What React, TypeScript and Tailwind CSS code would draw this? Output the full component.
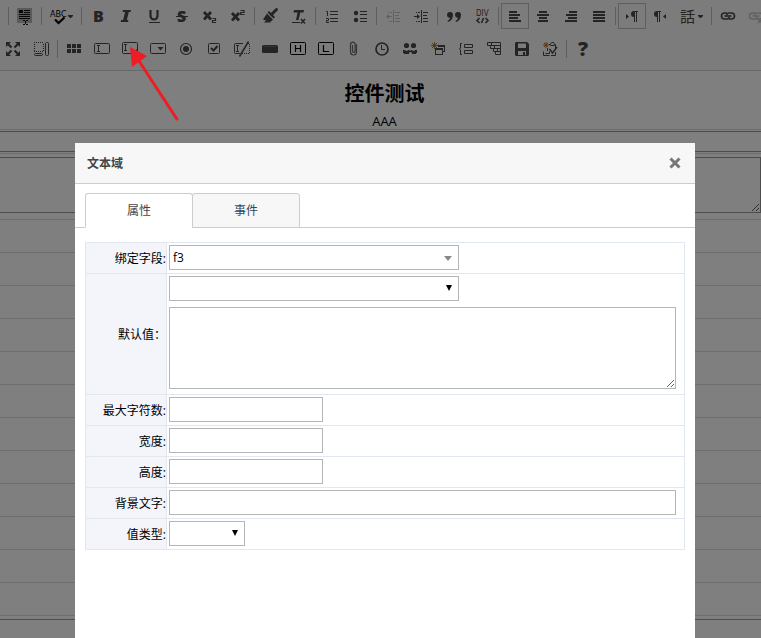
import React, { useState } from 'react';

type Tool = {
  name: string;
  icon?: React.ReactNode;
  wide?: boolean;
  active?: boolean;
  disabled?: boolean;
};

const SEP: Tool = { name: '|' };

const line = { fill: 'none', stroke: 'currentColor' };

const boldText = {
  fontFamily: '"Open Sans", "Noto Sans", sans-serif',
  fontWeight: 800,
};

const smallText = '"DejaVu Sans Condensed", "Liberation Sans", sans-serif';

const caret = <path d="M24 12h5v1l-2 2h-1l-2-2z" />;

const chain = (
  <g {...line} strokeWidth="1.6">
    <path d="M13 10h-2.5a3 3 0 0 0 0 6H13a2.5 2.500 0 0 0 2.4-2" />
    <path d="M15 16h2.5a3 3 0 0 0 0-6H15a2.5 2.500 0 0 0-2.4 2" />
    <path d="M10.5 13h7" />
  </g>
);

const pilcrow = 'M16 8h4v1h-1v10h-1V9h-1v10h-1v-5a3 3 0 0 1 0-6z';

const rowOne: Tool[] = [
  SEP,
  {
    name: 'Form properties',
    icon: (
      <>
        <path fill="#b4b4b4" d="M6 5h15v15H6z" />
        <path fill="#111" d="M8 7h4v3H8zM13 7h6v1h-6zM13 9h6v1h-6zM8 11h11v1H8zM8 13h11v1H8zM8 15h11v1H8zM12 17h2v1h-2zM15 17h2v1h-2zM12 21h2v1h-2zM15 21h2v1h-2zM14 18h1v3h-1z" />
      </>
    ),
  },
  SEP,
  {
    name: 'Spell check',
    wide: true,
    icon: (
      <>
        <text x="6" y="14" fontSize="9" fill="#000" fontFamily={smallText}>ABC</text>
        <path d="M11 16.5l3.5 3.5 6-5.5" fill="none" stroke="#000" strokeWidth="2.2" />
        {caret}
      </>
    ),
  },
  SEP,
  { name: 'Bold', icon: <text x="9" y="19" fontSize="16" {...boldText}>B</text> },
  {
    name: 'Italic',
    icon: <path d="M11 7h8l-.4 2h-1.800l-2 8h1.700l-.5 2H8.600l.5-2h2l2-8h-2.600z" />,
  },
  {
    name: 'Underline',
    icon: (
      <>
        <path d="M10.500 7v6a3.500 3.500 0 0 0 7 0V7" {...line} strokeWidth="2.200" />
        <path d="M9 19h11v1H9z" />
      </>
    ),
  },
  {
    name: 'Strikethrough',
    icon: (
      <>
        <text x="9" y="19" fontSize="16" {...boldText}>S</text>
        <path d="M8 13h12v1H8z" />
      </>
    ),
  },
  {
    name: 'Subscript',
    icon: (
      <>
        <path d="M8 9l7 7.500M15 9l-7 7.500" {...line} strokeWidth="2.800" />
        <path d="M16.500 15.500h3v2h-3v2H20" {...line} strokeWidth="1.200" />
      </>
    ),
  },
  {
    name: 'Superscript',
    icon: (
      <>
        <path d="M8 10l7 7.500M15 10l-7 7.500" {...line} strokeWidth="2.800" />
        <path d="M16.500 7.500h3.500v2h-3.500v2h4" {...line} strokeWidth="1.200" />
      </>
    ),
  },
  SEP,
  {
    name: 'Copy formatting',
    icon: (
      <>
        <path d="M19.500 6.500l-5 5" {...line} strokeWidth="3" strokeLinecap="round" />
        <path d="M12 8l6 6-1.500 1.500-6-6z" />
        <path d="M10 10.500l6 6-3 3H7l2-2-3-1z" />
      </>
    ),
  },
  {
    name: 'Remove format',
    icon: (
      <>
        <path d="M9 7h10l-.5 2.500h-3.200L13.500 17H11l1.600-7.500H8.500z" />
        <path d="M7 19h8v1H7z" />
        <path d="M16 16l4 4.500M20 16l-4 4.500" {...line} strokeWidth="1.500" />
      </>
    ),
  },
  SEP,
  {
    name: 'Numbered list',
    icon: (
      <>
        <path d="M12 8h8v1h-8zM12 11h8v1h-8zM12 15h8v1h-8zM12 18h8v1h-8z" />
        <path d="M8 8.500h1.500V13M8 15.500h2.500v2h-2v2h2.500" {...line} />
      </>
    ),
  },
  {
    name: 'Bulleted list',
    icon: (
      <>
        <path d="M14 8h7v1h-7zM14 11h7v1h-7zM14 15h7v1h-7zM14 18h7v1h-7z" />
        <circle cx="10" cy="10" r="2.200" />
        <circle cx="10" cy="17" r="2.200" />
      </>
    ),
  },
  SEP,
  {
    name: 'Decrease indent',
    disabled: true,
    icon: (
      <path d="M14 7h1v13h-1zM16 9h5v1h-5zM16 12h4v1h-4zM16 15h5v1h-5zM16 18h5v1h-5zM9 9h1v1H9zM11 9h2v1h-2zM9 18h1v1H9zM11 18h2v1h-2zM7 13.500l3-2.500v2h3v1h-3v2z" />
    ),
  },
  {
    name: 'Increase indent',
    icon: (
      <path d="M14 7h1v13h-1zM16 9h5v1h-5zM16 12h4v1h-4zM16 15h5v1h-5zM16 18h5v1h-5zM9 9h1v1H9zM11 9h2v1h-2zM9 18h1v1H9zM11 18h2v1h-2zM13 13.500L10 11v2H7v1h3v2z" />
    ),
  },
  SEP,
  {
    name: 'Block quote',
    icon: (
      <>
        <path d="M10 9a2.700 2.700 0 0 1 3 3c0 3.500-2 6-5 7l-.5-1c1.600-.8 2.300-1.800 2.400-3.200A2.900 2.900 0 0 1 10 9z" />
        <path d="M18 9a2.700 2.700 0 0 1 3 3c0 3.500-2 6-5 7l-.5-1c1.600-.8 2.300-1.800 2.400-3.200A2.900 2.900 0 0 1 18 9z" />
      </>
    ),
  },
  {
    name: 'Div container',
    icon: (
      <>
        <text x="8" y="13" fontSize="8" fontFamily={smallText}>DIV</text>
        <path d="M11.500 15L9 17.500l2.500 2.500M17.500 15l2.500 2.500-2.500 2.500M15.500 15l-2 5" {...line} strokeWidth="1.600" />
      </>
    ),
  },
  SEP,
  { name: 'Align left', active: true, icon: <path d="M8 8h8v2H8zM8 11h11v2H8zM8 14h9v2H8zM8 17h12v2H8z" /> },
  { name: 'Center', icon: <path d="M10 8h8v2h-8zM8 11h12v2H8zM10 14h8v2h-8zM9 17h10v2H9z" /> },
  { name: 'Align right', icon: <path d="M12 8h8v2h-8zM9 11h11v2H9zM11 14h9v2h-9zM8 17h12v2H8z" /> },
  { name: 'Justify', icon: <path d="M8 8h12v2H8zM8 11h12v2H8zM8 14h12v2H8zM8 17h12v2H8z" /> },
  SEP,
  {
    name: 'Text direction left to right',
    active: true,
    icon: (
      <>
        <path d={pilcrow} />
        <path d="M8 11l3 2.500L8 16z" />
      </>
    ),
  },
  {
    name: 'Text direction right to left',
    icon: (
      <>
        <path d={pilcrow} transform="translate(-5 0)" />
        <path d="M20 11l-3 2.500 3 2.500z" />
      </>
    ),
  },
  {
    name: 'Language',
    wide: true,
    icon: (
      <>
        <text x="6" y="19" fontSize="15" fontFamily='"Noto Sans CJK JP", sans-serif'>話</text>
        {caret}
      </>
    ),
  },
  SEP,
  { name: 'Link', icon: chain },
  {
    name: 'Unlink',
    disabled: true,
    icon: (
      <>
        {chain}
        <path d="M16 16l4 4M20 16l-4 4" {...line} strokeWidth="1.500" />
      </>
    ),
  },
];

const rowTwo: Tool[] = [
  {
    name: 'Maximize',
    icon: (
      <>
        <path d="M7 6h5l-5 5zM21 6v5l-5-5zM7 20v-5l5 5zM21 20h-5l5-5z" />
        <path d="M8 7l4.500 4.500M20 7l-4.500 4.500M8 19l4.500-4.500M20 19l-4.500-4.500" {...line} strokeWidth="2.200" />
      </>
    ),
  },
  {
    name: 'Show blocks',
    icon: (
      <>
        <path d="M7 6.500h10M7 15.500h10M7.500 8v7M16.500 8v7" {...line} strokeWidth="1.200" strokeDasharray="1 1" />
        <rect x="7.500" y="17.500" width="8" height="2" rx="1" {...line} />
        <rect x="18.500" y="6.500" width="3" height="13" rx="1" {...line} />
      </>
    ),
  },
  SEP,
  { name: 'Table', icon: <path d="M7 8h4v4H7zM12 8h4v4h-4zM17 8h4v4h-4zM7 13h4v4H7zM12 13h4v4h-4zM17 13h4v4h-4z" /> },
  {
    name: 'Text field',
    icon: (
      <>
        <rect x="6.500" y="7.500" width="15" height="10" rx="1" {...line} />
        <path d="M9 9.500h3M9 15.500h3M10.500 9.500v6" {...line} />
      </>
    ),
  },
  {
    name: 'Textarea',
    icon: (
      <>
        <rect x="6.500" y="6.500" width="15" height="11" rx="1" {...line} />
        <path d="M8 8.500h3M8 14.500h3M9.500 8.500v6" {...line} />
        <path d="M21 13v4h-4z" />
      </>
    ),
  },
  {
    name: 'Selection field',
    icon: (
      <>
        <rect x="6.500" y="7.500" width="15" height="10" rx="1" {...line} />
        <path d="M13.500 11h6l-3 3.500z" />
      </>
    ),
  },
  {
    name: 'Radio button',
    icon: (
      <>
        <circle cx="14" cy="13" r="5.500" {...line} strokeWidth="1.200" />
        <circle cx="14" cy="13" r="3" />
      </>
    ),
  },
  {
    name: 'Checkbox',
    icon: (
      <>
        <rect x="8.500" y="7.500" width="11" height="10" rx="1" {...line} />
        <path d="M11 12l2.500 2.500 4-4.500" {...line} strokeWidth="2" />
      </>
    ),
  },
  {
    name: 'Hidden field',
    icon: (
      <>
        <path d="M15 7.500H7.500a1 1 0 0 0-1 1v8a1 1 0 0 0 1 1H12M8 9.500h3M8 15.500h3M9.500 9.500v6" {...line} />
        <path d="M20 7.500h1.500v10H14" {...line} strokeDasharray="1 1" />
        <path d="M11.500 20.500l9-15" {...line} strokeWidth="1.500" />
      </>
    ),
  },
  {
    name: 'Button',
    icon: (
      <>
        <rect x="6" y="9" width="16" height="8" rx="1.500" />
        <path d="M8 10.500h12" stroke="#666" />
      </>
    ),
  },
  {
    name: 'HTML control',
    icon: (
      <>
        <rect x="6.500" y="6.500" width="15" height="12" rx="1" fill="none" stroke="#000" />
        <path d="M11.500 9v7M16.500 9v7M11.500 12.500h5" fill="none" stroke="#000" strokeWidth="1.200" />
      </>
    ),
  },
  {
    name: 'Label',
    icon: (
      <>
        <rect x="6.500" y="6.500" width="15" height="12" rx="1" fill="none" stroke="#000" />
        <path d="M11.500 9v6.500H17" fill="none" stroke="#000" strokeWidth="1.200" />
      </>
    ),
  },
  {
    name: 'Attachment',
    icon: (
      <path d="M12.500 9v6a1.300 1.300 0 0 0 2.600 0V8.500a2.200 2.200 0 0 0-4.600 0V16a3 3 0 0 0 6 0V8" {...line} strokeWidth="1.200" opacity=".8" />
    ),
  },
  {
    name: 'Date',
    icon: (
      <>
        <circle cx="14" cy="13" r="6" {...line} strokeWidth="1.700" />
        <path d="M13.500 9v4.500H17" {...line} />
      </>
    ),
  },
  {
    name: 'Users',
    icon: (
      <>
        <circle cx="10.500" cy="9.500" r="2.600" />
        <circle cx="17.500" cy="9.500" r="2.600" />
        <path d="M7 14h2l1 1h1l1-1h1l1 1 1-1h1l1 1h1l1-1h2v3h-1v1h-4v-1l-1-1h-1l-1 1v1H8v-1H7z" />
      </>
    ),
  },
  {
    name: 'New window',
    icon: (
      <>
        <path d="M10.500 6v7M7 9.500h7M8 7l5 5M13 7l-5 5" stroke="#b87417" />
        <path d="M14 9.500h7M14 10.500h7M20.500 9v7M19 15.500h2" {...line} />
        <rect x="11.500" y="12.500" width="7" height="6" {...line} />
        <path d="M11 12h8v2h-8z" />
      </>
    ),
  },
  {
    name: 'Field group',
    icon: (
      <>
        <path d="M10 7.500H8.500v4.500l-1 1 1 1v4.500H10" {...line} />
        <path d="M12.500 8.500h8v3h-8zM12.500 14.500h8v3h-8z" {...line} />
      </>
    ),
  },
  {
    name: 'Tree',
    icon: (
      <path d="M7.500 6.500h13v3h-13zM10.500 9.500h10v3h-10zM13.500 12.500h7v3h-7zM15.500 15.500h5v3h-5zM11.500 6.500v3M14.500 9.500v3M17.500 12.500v3" {...line} />
    ),
  },
  {
    name: 'Save',
    icon: (
      <path fillRule="evenodd" d="M8 6h11l2 2v11l-1 1H8l-1-1V7zM10 7.500V12h8V7.500zM10 15v4h5v-3h2v3h1v-4z" />
    ),
  },
  {
    name: 'Template check',
    icon: (
      <>
        <path d="M10 6v6M7 9h6M8 7l4 4M12 7l-4 4" stroke="#b87417" />
        <path d="M13 8.500h1.500v1h4v-1h1V13M14.500 8l1-1.500h2l1 1.500M11.500 12v3M19.500 16v3.500H15" {...line} />
        <path d="M13.500 13l3 4 4.500-6" {...line} strokeWidth="1.500" />
        <path d="M7.500 15.500v4h6M9.500 17.500h4v-2" {...line} />
      </>
    ),
  },
  SEP,
  { name: 'Help', icon: <text x="9" y="20" fontSize="20" {...boldText}>?</text> },
];

const ToolRow = ({ tools, className }: { tools: Tool[]; className?: string }) => (
  <div className={`flex h-[26px] items-center ${className || ''}`}>
    {tools.map((tool, i) =>
      tool.icon ? (
        <button
          key={i}
          type="button"
          aria-label={tool.name}
          disabled={tool.disabled}
          className={`relative h-[26px] shrink-0 ${tool.wide ? 'w-[35px]' : 'w-7'} ${tool.active ? 'outline -outline-offset-1 outline-[#bcbcbc]' : ''} ${tool.disabled ? 'opacity-30' : ''}`}
        >
          <svg viewBox={tool.wide ? '0 0 35 26' : '0 0 28 26'} className="block h-full w-full fill-current">
            {tool.icon}
          </svg>
        </button>
      ) : (
        <span key={i} className="mx-[2px] h-[18px] w-px shrink-0 bg-[#bcbcbc]" />
      )
    )}
  </div>
);

const Field = ({ id, label, children }: { id: string; label: string; children: React.ReactNode }) => (
  <tr>
    <th scope="row" className="w-[81px] border border-[#e1e7f0] bg-[#f3f5fa] p-0 pt-[2px] text-right font-normal whitespace-nowrap">
      <label htmlFor={id}>{label}</label>
    </th>
    <td className="border border-[#e1e7f0] pt-[2px] pr-[8px] pb-[3px] pl-[2px]">{children}</td>
  </tr>
);

const box = 'block h-[25px] border border-[#b5b5b5] bg-white px-[3px] text-xs outline-none';

const Select = ({ id, label, options, width, soft }: { id: string; label?: string; options: string[]; width: string; soft?: boolean }) => (
  <div className={`relative ${width}`}>
    <select id={id} aria-label={label} className={`${box} w-full appearance-none`}>
      {options.map((o) => (
        <option key={o}>{o}</option>
      ))}
    </select>
    {soft ? (
      <svg viewBox="0 0 8 5" className="pointer-events-none absolute top-[11px] right-[7px] h-[5px] w-2 fill-[#888]">
        <path d="M0 0h8L4 5z" />
      </svg>
    ) : (
      <svg viewBox="0 0 6 6" className="pointer-events-none absolute top-[9px] right-[7px] h-[6px] w-[6px] fill-black">
        <path d="M0 0h6L3 6z" />
      </svg>
    )}
  </div>
);

const App = () => {
  const [tab, setTab] = useState('属性');

  return (
    <div className="relative min-h-screen overflow-hidden bg-white font-['Open_Sans','Noto_Sans_CJK_SC',sans-serif] text-xs text-black">
      {/* Editor page */}
      <div className="-ml-px flex flex-col gap-[7px] border-b border-[#d1d1d1] bg-[#f8f8f8] pt-[3px] pb-2 text-[#484848]">
        <ToolRow tools={rowOne} className="pl-[7px]" />
        <ToolRow tools={rowTwo} />
      </div>
      <header className="h-[59px] border-b border-[#dddddd] pt-[9px] pl-2 text-center">
        <h1 className="text-xl leading-7 font-bold">控件测试</h1>
        <p className="text-[13px] leading-[26px]">AAA</p>
      </header>
      <div className="border-b border-[#dddddd] py-px">
        <input aria-label="f1" className="block h-[21px] w-full border-y border-[#999] outline-none" />
      </div>
      <div className="border-b border-[#dddddd] pt-[3px] pb-[6px]">
        <textarea aria-label="f3" className="block h-14 w-full border border-l-0 border-[#999] outline-none" />
      </div>
      {Array.from({ length: 12 }, (_, i) => (
        <div key={i} className="h-[33px] border-b border-[#dddddd]" />
      ))}
      <div className="mt-[3px] border-t border-[#999]" />

      {/* Dialog */}
      <div className="absolute inset-0 flex bg-black/50 pt-[143px] pr-[66px] pl-[75px]">
        <div role="dialog" aria-label="文本域" className="min-w-0 flex-1 bg-white">
          <div className="flex h-[41px] items-center justify-between border-b border-[#cccccc] bg-[#f7f7f7] pr-[14px] pl-3">
            <h2 className="pt-[2px] font-bold text-[#444]">文本域</h2>
            <button type="button" aria-label="Close" className="text-[#777]">
              <svg viewBox="0 0 12 12" className="h-3 w-3 fill-none stroke-current stroke-3">
                <path d="M1.500 1.500l9 9M10.500 1.500l-9 9" />
              </svg>
            </button>
          </div>

          <div role="tablist" className="mt-[9px] flex border-b border-[#cccccc] pl-[10px]">
            {['属性', '事件'].map((name) => (
              <button
                key={name}
                type="button"
                role="tab"
                aria-selected={tab === name}
                onClick={() => setTab(name)}
                className={`-mr-px -mb-px h-[35px] w-[108px] rounded-t-[3px] border border-[#cccccc] ${tab === name ? 'border-b-white bg-white text-[#444]' : 'bg-[#f7f7f7] text-[#34495e]'}`}
              >
                {name}
              </button>
            ))}
          </div>

          <div className="px-[10px] pt-[14px]">
            <table className="w-full border-collapse">
              <tbody>
                <Field id="field" label="绑定字段:">
                  <Select id="field" options={['f3']} width="w-[290px]" soft />
                </Field>
                <Field id="value" label="默认值：">
                  <Select id="preset" label="默认值" options={['']} width="w-[290px]" />
                  <textarea id="value" className="mt-[6px] mb-[2px] block h-[82px] w-full border border-[#b5b5b5] bg-white outline-none" />
                </Field>
                <Field id="max" label="最大字符数:">
                  <input id="max" className={`${box} w-[154px]`} />
                </Field>
                <Field id="width" label="宽度:">
                  <input id="width" className={`${box} w-[154px]`} />
                </Field>
                <Field id="height" label="高度:">
                  <input id="height" className={`${box} w-[154px]`} />
                </Field>
                <Field id="placeholder" label="背景文字:">
                  <input id="placeholder" className={`${box} w-full`} />
                </Field>
                <Field id="type" label="值类型:">
                  <Select id="type" options={['']} width="w-[76px]" />
                </Field>
              </tbody>
            </table>
          </div>
        </div>
      </div>

      {/* Pointer to the textarea tool */}
      <svg viewBox="0 0 50 76" className="pointer-events-none absolute top-[47px] left-[130px] h-[76px] w-[50px]">
        <path d="M9 14l38.500 59" stroke="#ee1c24" strokeWidth="3" />
        <path d="M0 0l17 9L2 20z" fill="#ee1c24" />
      </svg>
    </div>
  );
};

export default App;
